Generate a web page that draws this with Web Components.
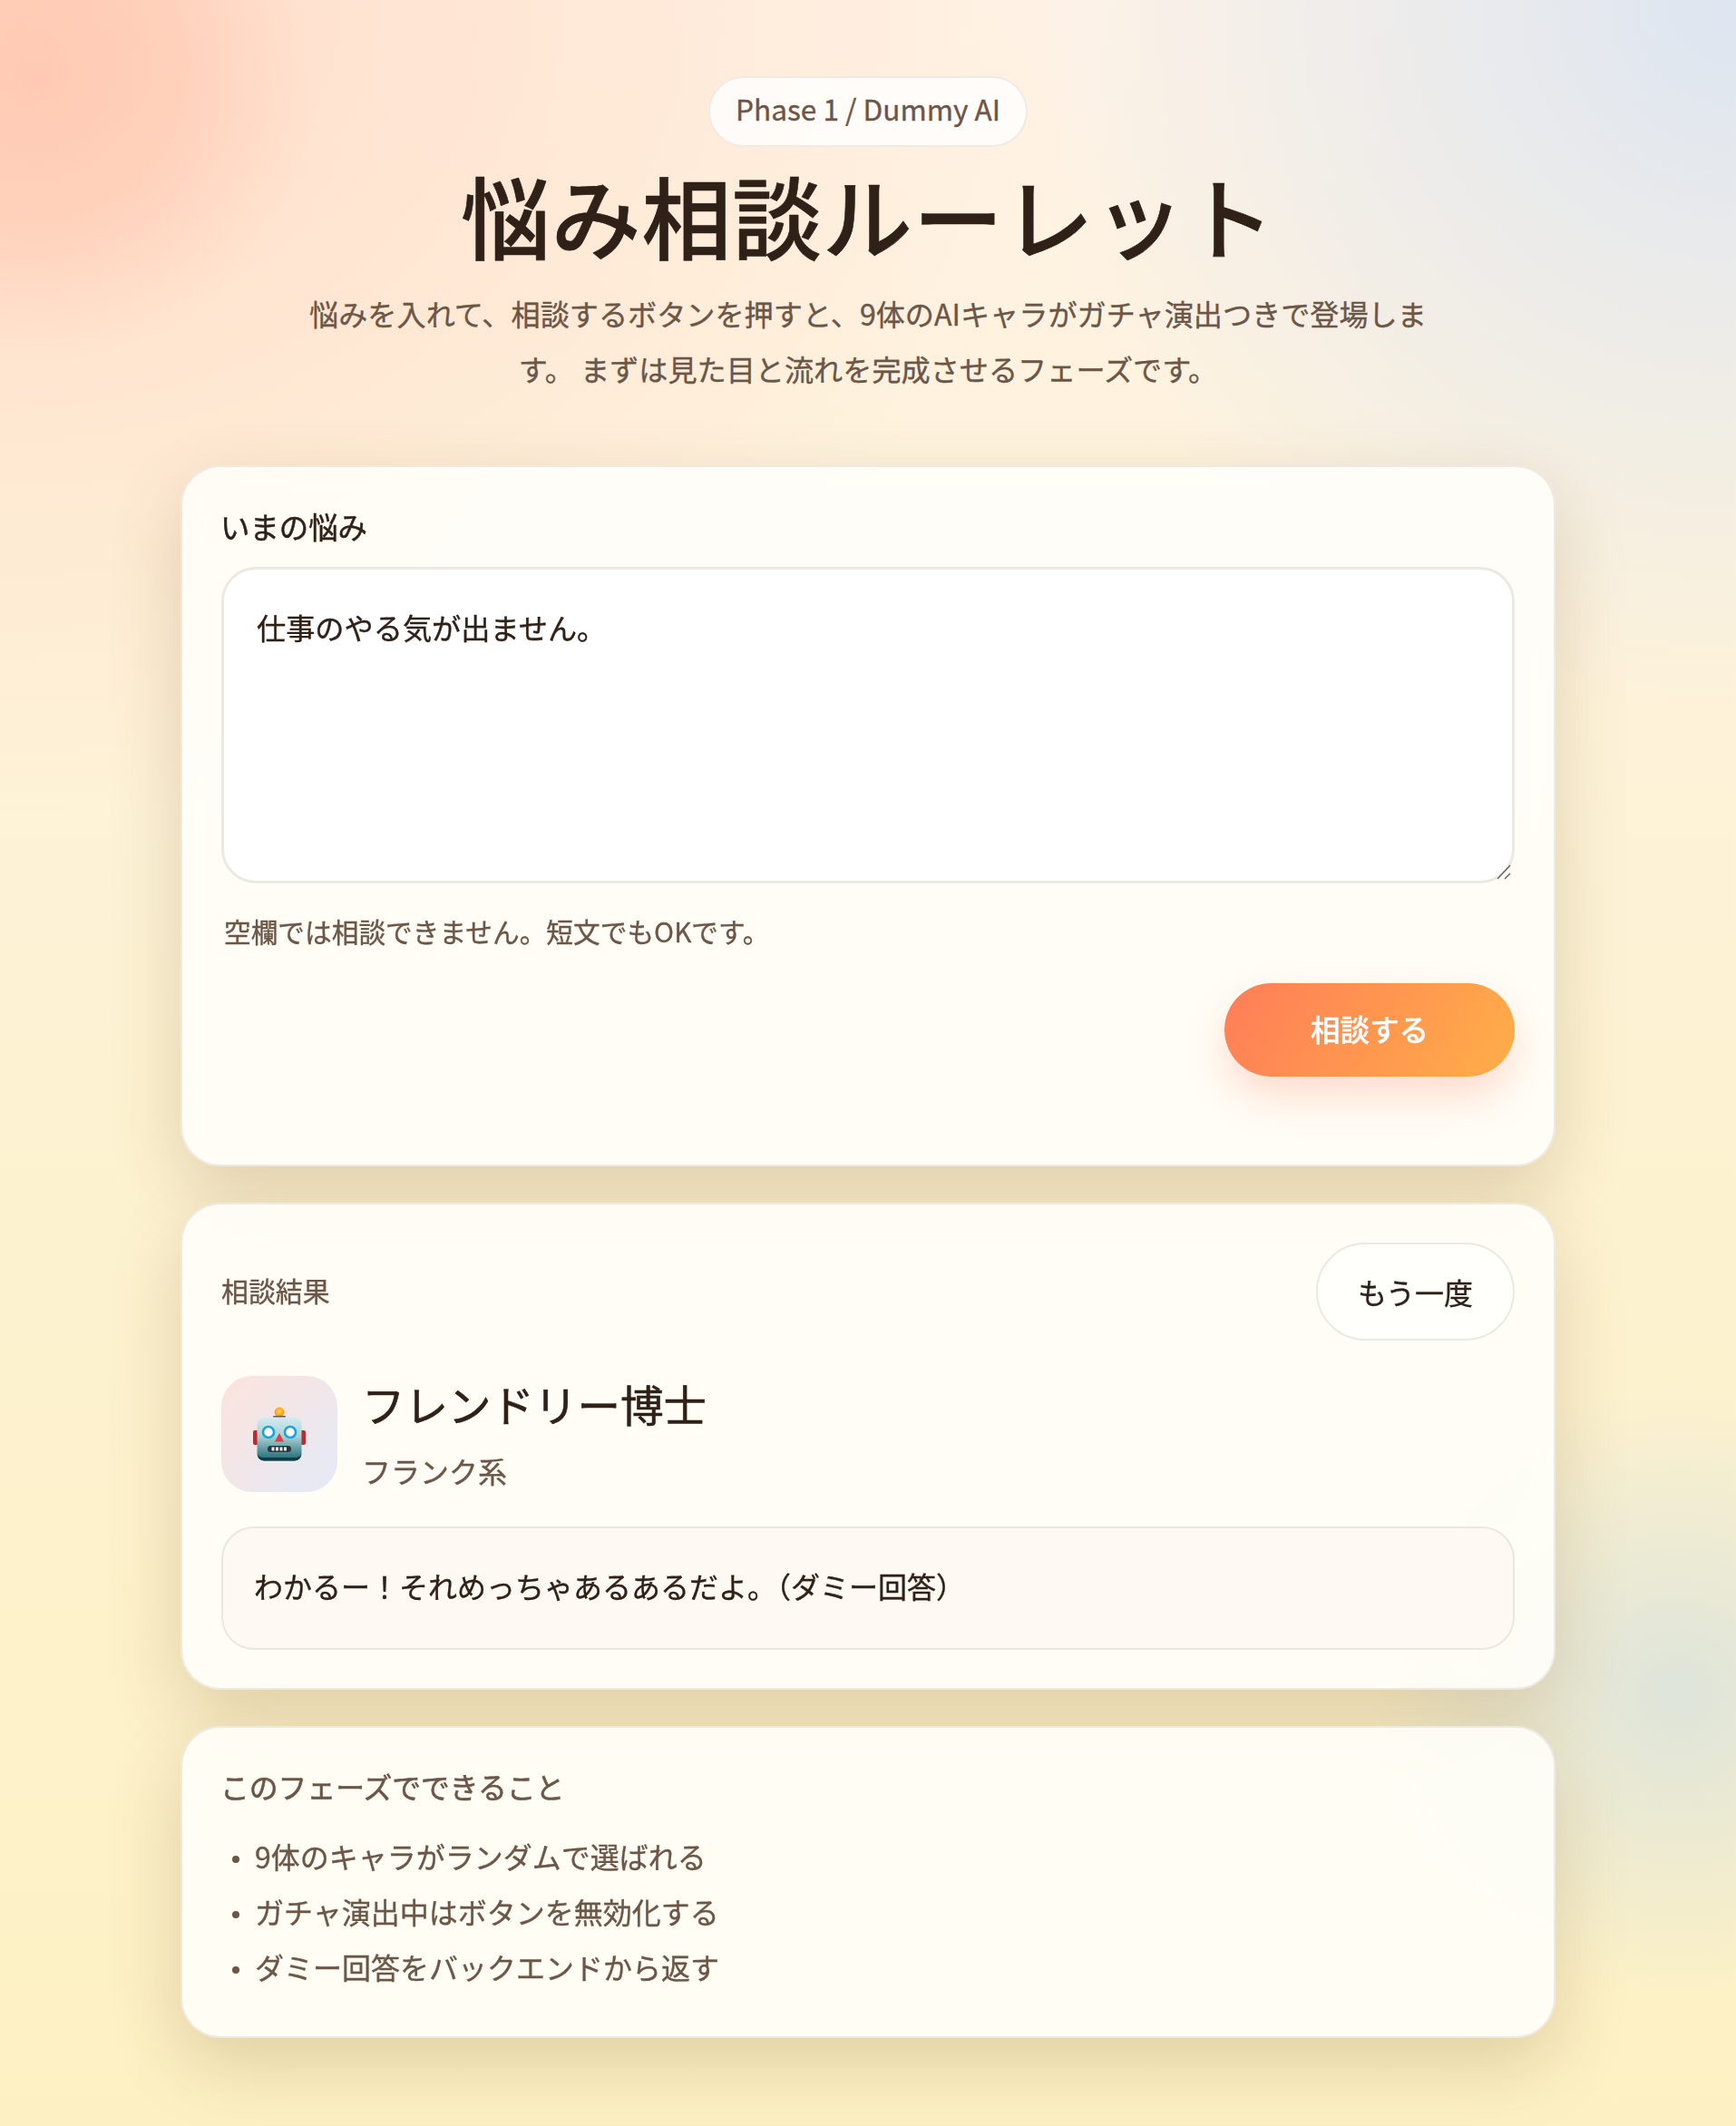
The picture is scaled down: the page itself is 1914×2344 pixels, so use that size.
<!DOCTYPE html>
<html lang="ja">
<head>
<meta charset="utf-8">
<title>悩み相談ルーレット</title>
<style>
  html, body { margin: 0; padding: 0; }
  body {
    height: 2344px;
    overflow: hidden;
    font-family: "Noto Sans CJK JP", "Noto Sans", sans-serif;
    color: #2f2118;
    -webkit-text-stroke: .35px;
    background:
      radial-gradient(circle 310px at 40px 90px, rgba(255,175,150,.44) 0%, rgba(255,175,150,.32) 50%, rgba(255,175,150,0) 100%),
      radial-gradient(circle 790px at 1914px 0px, rgba(208,224,245,.72) 0%, rgba(208,224,245,.36) 50%, rgba(208,224,245,0) 100%),
      radial-gradient(circle 340px at 1850px 1866px, rgba(190,215,235,.5) 0%, rgba(190,215,235,0) 100%),
      radial-gradient(ellipse 1200px 900px at 0px 0px, rgba(255,205,180,.6) 0%, rgba(255,205,180,0) 100%),
      linear-gradient(180deg, #fff3e6 0%, #fdf2d2 50%, #fdf1c4 100%);
  }
</style>
</head>
<body>
<roulette-app>
  <hero-head slot="head" badge="Phase 1 / Dummy AI" title-text="悩み相談ルーレット">
    悩みを入れて、相談するボタンを押すと、9体のAIキャラがガチャ演出つきで登場します。 まずは見た目と流れを完成させるフェーズです。
  </hero-head>
  <worry-form label="いまの悩み" hint="空欄では相談できません。短文でもOKです。" value="仕事のやる気が出ません。" action="相談する"></worry-form>
  <result-card heading="相談結果" again="もう一度" name="フレンドリー博士" kind="フランク系">
    わかるー！それめっちゃあるあるだよ。（ダミー回答）
  </result-card>
  <phase-notes heading="このフェーズでできること">
    <li>9体のキャラがランダムで選ばれる</li>
    <li>ガチャ演出中はボタンを無効化する</li>
    <li>ダミー回答をバックエンドから返す</li>
  </phase-notes>
</roulette-app>

<script>
// shared look of the three white panels
const panelCss = `
  :host{
    display:block;
    box-sizing:border-box;
    padding:43px;
    background:rgba(255,255,252,.86);
    backdrop-filter:blur(12px);
    border:2px solid rgba(236,232,224,.9);
    border-radius:44px;
    box-shadow:0 30px 80px rgba(110,75,30,.2);
  }
`;

class RouletteApp extends HTMLElement {
  constructor(){
    super();
    this.attachShadow({mode:"open"}).innerHTML = `
      <style>
        :host{display:flex;flex-direction:column;gap:40px;width:1516px;margin:0 auto;padding-top:84px;}
      </style>
      <slot name="head"></slot>
      <slot></slot>`;
  }
}

class HeroHead extends HTMLElement {
  connectedCallback(){
    this.attachShadow({mode:"open"}).innerHTML = `
      <style>
        :host{display:flex;flex-direction:column;align-items:center;margin-bottom:-40px;height:429px;}
        .badge{
          box-sizing:border-box;height:78px;padding:0 28px 8px;display:flex;align-items:center;
          border:2px solid #efebe4;border-radius:39px;background:rgba(255,255,255,.8);
          font-size:31.6px;color:#6b5647;
        }
        h1{margin:15px 0 0;font-size:98.8px;line-height:118px;font-weight:500;color:#2f2118;letter-spacing:1px;-webkit-text-stroke:.6px;}
        p{margin:20px 0 0;width:1250px;text-align:center;font-size:32.15px;line-height:61px;color:#6b5647;}
      </style>
      <div class="badge">${this.getAttribute("badge")}</div>
      <h1>${this.getAttribute("title-text")}</h1>
      <p><slot></slot></p>`;
  }
}

class WorryForm extends HTMLElement {
  connectedCallback(){
    this.attachShadow({mode:"open"}).innerHTML = `
      <style>
        ${panelCss}
        :host{height:773px;padding-top:44px;}
        label{display:block;font-size:32.4px;line-height:44px;color:#2f2118;margin:-1px 0 23px -1px;-webkit-text-stroke:.5px;}
        .field{position:relative;}
        textarea{
          display:block;box-sizing:border-box;width:100%;height:348.5px;padding:39px 36px 24px;
          border:3px solid #ebe9e2;border-radius:38px;background:#fff;outline:none;resize:none;
          font:32.2px/1.5 "Noto Sans CJK JP","Noto Sans",sans-serif;color:#2f2118;-webkit-text-stroke:.35px;
        }
        .grip{position:absolute;right:0;bottom:0;width:24px;height:24px;}
        .hint{margin:32px 0 0 3px;font-size:29.7px;line-height:42px;color:#6b5647;}
        .row{display:flex;justify-content:flex-end;margin-top:36px;}
        button{
          width:320px;height:103px;padding:0 0 3px;border:0;border-radius:52px;
          background:linear-gradient(120deg,#ff7d58,#ffae48);
          box-shadow:0 22px 44px rgba(255,120,90,.25);
          color:#fff;font:500 32.5px "Noto Sans CJK JP","Noto Sans",sans-serif;-webkit-text-stroke:.35px;
        }
      </style>
      <label>${this.getAttribute("label")}</label>
      <div class="field">
        <textarea>${this.getAttribute("value")}</textarea>
        <svg class="grip" viewBox="0 0 24 24"><path d="M5 19L19 4M13 19l6-6" stroke="#666" stroke-width="1.500" fill="none"/></svg>
      </div>
      <div class="hint">${this.getAttribute("hint")}</div>
      <div class="row"><button>${this.getAttribute("action")}</button></div>`;
  }
}

class RobotFace extends HTMLElement {
  constructor(){
    super();
    this.attachShadow({mode:"open"}).innerHTML = `
      <style>:host{display:block;width:60px;height:60px;}svg{display:block;width:100%;height:100%;}</style>
      <svg viewBox="0 0 60 60">
        <defs>
          <linearGradient id="face" x1="0" y1="0" x2="0" y2="1">
            <stop offset="0" stop-color="#d5ecf0"/><stop offset=".45" stop-color="#a9d0d4"/><stop offset="1" stop-color="#1d6672"/>
          </linearGradient>
          <radialGradient id="bulb" cx=".5" cy=".4" r=".6">
            <stop offset="0" stop-color="#ffd84a"/><stop offset="1" stop-color="#f98a12"/>
          </radialGradient>
        </defs>
        <rect x="1" y="26" width="6" height="16" rx="2" fill="#c0282c"/>
        <rect x="53" y="26" width="6" height="16" rx="2" fill="#c0282c"/>
        <circle cx="30" cy="6" r="5.4" fill="url(#bulb)"/>
        <path d="M23 10h14c0 3-3 5-7 5s-7-2-7-5z" fill="#6d4c9f"/>
        <rect x="5.500" y="11.500" width="49" height="48" rx="8" fill="url(#face)"/>
        <path d="M5.500 51c0 5 3.500 8.500 8 8.500h33c4.500 0 8-3.500 8-8.500 0 3-3 5-8 5h-33c-5 0-8-2-8-5z" fill="#0b3c48"/>
        <circle cx="18" cy="28" r="6" fill="#fff" stroke="#18a5dc" stroke-width="2.600"/>
        <circle cx="42" cy="28" r="6" fill="#fff" stroke="#18a5dc" stroke-width="2.600"/>
        <path d="M30 29l5 9.500H25z" fill="#d6434a"/>
        <rect x="17" y="43" width="26" height="7" rx="3.500" fill="#28363c"/>
        <path d="M21.500 44.500h3v4h-3zM26 44.500h3v4h-3zM30.500 44.500h3v4h-3zM35 44.500h3v4h-3z" fill="#e6e9ea"/>
      </svg>`;
  }
}

class ResultCard extends HTMLElement {
  connectedCallback(){
    this.attachShadow({mode:"open"}).innerHTML = `
      <style>
        ${panelCss}
        :host{height:537px;padding-top:42px;}
        .top{display:flex;justify-content:space-between;align-items:center;}
        .heading{font-size:29.9px;padding-bottom:4px;color:#6b5647;}
        button{
          box-sizing:border-box;width:219px;height:108px;border:2px solid #ece8e2;border-radius:54px;
          background:rgba(255,255,255,.7);color:#2f2118;
          font:32px "Noto Sans CJK JP","Noto Sans",sans-serif;-webkit-text-stroke:.35px;
        }
        .who{display:flex;gap:27px;align-items:center;margin-top:35px;}
        .avatar{
          width:128px;height:128px;border-radius:34px;display:flex;align-items:center;justify-content:center;
          background:linear-gradient(135deg,#fde3dc,#e3eaf7);
        }
        .names{padding-bottom:4px;}
        .name{font-size:47.5px;line-height:70px;color:#2f2118;-webkit-text-stroke:.6px;}
        .kind{font-size:32px;line-height:46px;color:#6b5647;margin-top:15px;}
        .answer{
          box-sizing:border-box;margin-top:35px;height:136px;padding:0 34px 6px;display:flex;align-items:center;
          border:2px solid #ebe7df;border-radius:36px;background:#fff9f4;font-size:32px;color:#2f2118;
        }
      </style>
      <div class="top">
        <div class="heading">${this.getAttribute("heading")}</div>
        <button>${this.getAttribute("again")}</button>
      </div>
      <div class="who">
        <div class="avatar"><robot-face></robot-face></div>
        <div class="names">
          <div class="name">${this.getAttribute("name")}</div>
          <div class="kind">${this.getAttribute("kind")}</div>
        </div>
      </div>
      <div class="answer"><slot></slot></div>`;
  }
}

class PhaseNotes extends HTMLElement {
  connectedCallback(){
    this.attachShadow({mode:"open"}).innerHTML = `
      <style>
        ${panelCss}
        :host{height:344px;color:#6b5647;}
        .heading{font-size:31.8px;line-height:46px;margin:-2px 0 0 -1px;-webkit-text-stroke:.6px;}
        ul{margin:24px 0 0;padding:0 0 0 37px;font-size:32px;line-height:61px;}
        ::slotted(li){list-style:none;position:relative;}
        ::slotted(li)::before{
          content:"";position:absolute;left:-25px;top:30px;width:8px;height:8px;border-radius:50%;background:currentColor;
        }
      </style>
      <div class="heading">${this.getAttribute("heading")}</div>
      <ul><slot></slot></ul>`;
  }
}

customElements.define("roulette-app", RouletteApp);
customElements.define("hero-head", HeroHead);
customElements.define("worry-form", WorryForm);
customElements.define("robot-face", RobotFace);
customElements.define("result-card", ResultCard);
customElements.define("phase-notes", PhaseNotes);
</script>
</body>
</html>
